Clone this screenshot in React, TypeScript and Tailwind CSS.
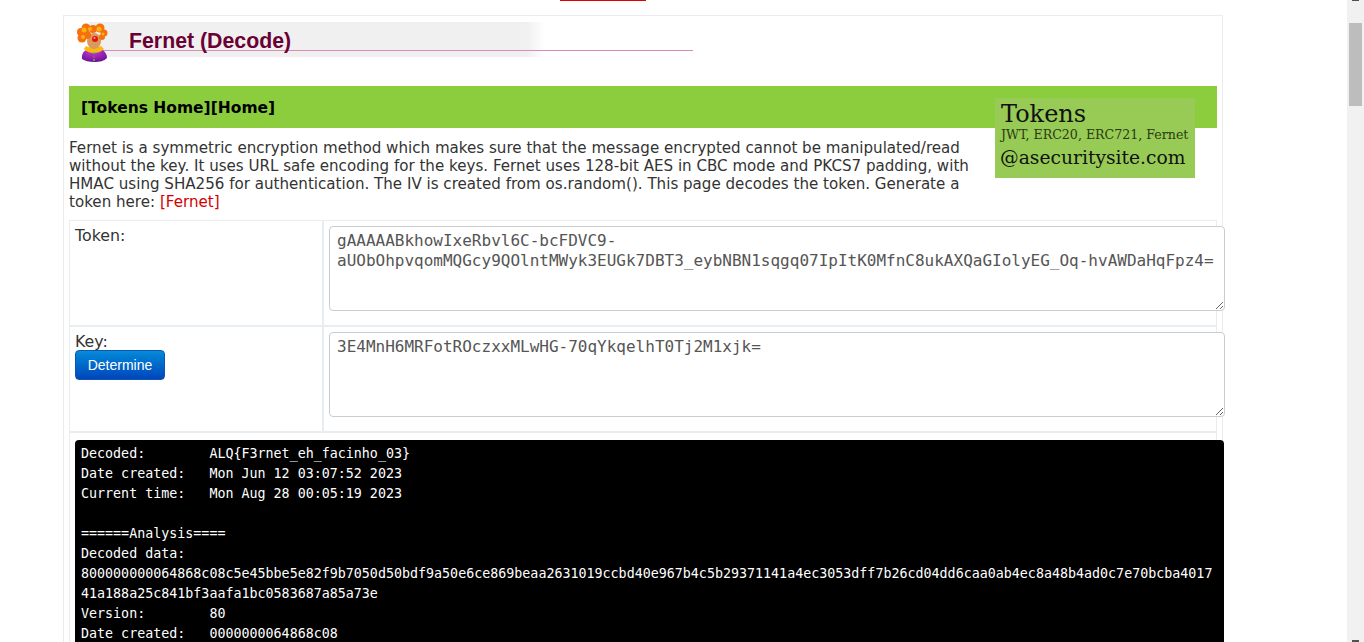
const hexA =
  "800000000064868c08c5e45bbe5e82f9b7050d50bdf9a50e6ce869beaa2631019ccbd40e967b4c5b29371141a4ec3053dff7b26cd04dd6caa0ab4ec8a48b4ad0c7e70bcba4017";

const output = `Decoded:        ALQ{F3rnet_eh_facinho_03}
Date created:   Mon Jun 12 03:07:52 2023
Current time:   Mon Aug 28 00:05:19 2023

======Analysis====
Decoded data:
${hexA}
41a188a25c841bf3aafa1bc0583687a85a73e
Version:        80
Date created:   0000000064868c08`;

function Clown() {
  return (
    <svg width="32" height="40" viewBox="0 0 32 40" className="shrink-0">
      <defs>
        <radialGradient id="suit" cx="0.45" cy="0.25" r="0.85">
          <stop offset="0" stopColor="#c83ad8" />
          <stop offset="1" stopColor="#5f0d8c" />
        </radialGradient>
      </defs>
      <path d="M6 36c-1-7 4-11 12-11s13 4 13 10c-3 3-7 4-13 4-5 0-9-1-12-3z" fill="url(#suit)" />
      <path d="M10 23c4 2 10 2 15 0l3 3c-3 3-7 4-10 4s-8-1-10-4z" fill="#fbb810" />
      <ellipse cx="18" cy="18" rx="7" ry="8" fill="#d99a5c" />
      <g fill="#f6700d">
        <circle cx="5" cy="9" r="4" />
        <circle cx="10" cy="5" r="4.5" />
        <circle cx="17" cy="6" r="4" />
        <circle cx="24" cy="5" r="4.5" />
        <circle cx="28" cy="10" r="3.5" />
        <circle cx="6" cy="15" r="4.5" />
        <circle cx="11" cy="12" r="4" />
        <circle cx="26" cy="14" r="3" />
      </g>
      <g fill="#fcb312">
        <circle cx="8" cy="7" r="2.5" />
        <circle cx="14" cy="6" r="2" />
        <circle cx="23" cy="6" r="2.5" />
        <circle cx="7" cy="14" r="2" />
        <circle cx="27" cy="11" r="1.5" />
      </g>
      <circle cx="19" cy="16" r="3" fill="#e3140e" />
      <circle cx="18.5" cy="15" r="1" fill="#f7a0a0" />
      <circle cx="18" cy="30" r="1" fill="#3bd13b" />
      <circle cx="18" cy="34" r="1" fill="#e8327a" />
      <circle cx="18" cy="37" r="1" fill="#3bd13b" />
    </svg>
  );
}

export default function App() {
  return (
    <div className="flex h-[642px] w-[1364px] overflow-hidden bg-white">
      <main className="w-[1347px] shrink-0 font-['DejaVu_Sans',sans-serif] text-[16px] text-[#333]">
        <div className="ml-[560px] h-px w-[86px] bg-[#e00000]" />
        <div className="ml-[63px] mt-[14px] w-[1160px] border border-[#e8edf2] px-[5px]">
          {/* title band */}
          <div className="relative flex h-[70px] items-start">
            <div className="absolute left-[20px] top-[6px] h-[35px] w-[456px] bg-gradient-to-r from-[#f0f0f0] from-96% to-white" />
            <div className="absolute left-[27px] top-[34px] h-px w-[597px] bg-[#d28fb5]" />
            <div className="relative z-10 ml-[7px] mt-[7px] flex">
              <Clown />
              <h1 className="ml-[21px] mt-[6px] font-['Liberation_Sans',sans-serif] text-[21.3px] font-bold leading-[24px] text-[#6b0033]">
                Fernet (Decode)
              </h1>
            </div>
          </div>

          {/* green nav */}
          <div className="relative h-[42px] bg-[#8ccd3e] pl-[12px] pt-[12px] text-[15.5px] font-bold leading-[20px] text-black">
            [Tokens Home][Home]
            <div className="absolute left-[926px] top-[12px] h-[80px] w-[200px] bg-[#97cb55] pl-[6px] pt-[3px] font-['DejaVu_Serif',serif] font-normal text-[#111]">
              <div className="text-[24px] leading-[26px]">Tokens</div>
              <div className="mt-[1px] whitespace-nowrap text-[12.6px] leading-[14px] text-[#2a3a12]">
                JWT, ERC20, ERC721, Fernet
              </div>
              <div className="-ml-px mt-[3px] whitespace-nowrap text-[18.7px] leading-[26px]">@asecuritysite.com</div>
            </div>
          </div>

          {/* intro */}
          <p className="mt-[11px] w-[915px] text-[15.1px] leading-[18px]">
            Fernet is a symmetric encryption method which makes sure that the message encrypted cannot be
            manipulated/read without the key. It uses URL safe encoding for the keys. Fernet uses 128-bit AES in CBC
            mode and PKCS7 padding, with HMAC using SHA256 for authentication. The IV is created from os.random(). This
            page decodes the token. Generate a token here: <span className="text-[#d40000]">[Fernet]</span>
          </p>

          {/* form table */}
          <div className="mt-[9px] border border-[#e8edf2]">
            <div className="flex h-[106px] border-b-2 border-[#e8edf2]">
              <div className="w-[254px] shrink-0 border-r-2 border-[#e8edf2] pl-[5px] pt-[6px] text-[15.8px] leading-[18px]">Token:</div>
              <div className="pl-[5px] pt-[5px]">
                <textarea
                  readOnly
                  defaultValue="gAAAAABkhowIxeRbvl6C-bcFDVC9-aUObOhpvqomMQGcy9QOlntMWyk3EUGk7DBT3_eybNBN1sqgq07IpItK0MfnC8ukAXQaGIolyEG_Oq-hvAWDaHqFpz4="
                  className="block h-[85px] w-[896px] rounded-[4px] border border-[#cccccc] bg-white px-[7px] py-[4px] font-['DejaVu_Sans_Mono',monospace] text-[16px] leading-[20px] text-[#555] outline-none"
                />
              </div>
            </div>
            <div className="flex h-[106px] border-b-2 border-[#e8edf2]">
              <div className="w-[254px] shrink-0 border-r-2 border-[#e8edf2] pl-[5px] pt-[6px] text-[15.8px] leading-[18px]">
                <div>Key:</div>
                <button className="-mt-px block h-[30px] w-[90px] rounded-[4px] border border-[#0a58b0] bg-gradient-to-b from-[#0a8ad8] to-[#0044bb] font-['Liberation_Sans',sans-serif] text-[14px] text-white">
                  Determine
                </button>
              </div>
              <div className="pl-[5px] pt-[5px]">
                <textarea
                  readOnly
                  defaultValue="3E4MnH6MRFotROczxxMLwHG-70qYkqelhT0Tj2M1xjk="
                  className="block h-[85px] w-[896px] rounded-[4px] border border-[#cccccc] bg-white px-[7px] py-[4px] font-['DejaVu_Sans_Mono',monospace] text-[16px] leading-[20px] text-[#555] outline-none"
                />
              </div>
            </div>
            <div className="pl-[5px] pt-[7px]">
              <pre className="w-[1149px] rounded-[4px] bg-black px-[6px] pt-[4px] pb-[40px] font-['DejaVu_Sans_Mono',monospace] text-[13.33px] leading-[20px] text-white">
                {output}
              </pre>
            </div>
          </div>
        </div>
      </main>

      {/* page scrollbar */}
      <div className="flex h-full w-[17px] shrink-0 flex-col items-center bg-[#f1f1f1]">
        <div className="h-px w-[7px] bg-[#505050]" />
        <div className="mt-[22px] h-[83px] w-[13px] bg-[#bdbdbd]" />
        <div className="mt-auto h-[2px] w-[7px] bg-[#505050]" />
      </div>
    </div>
  );
}
